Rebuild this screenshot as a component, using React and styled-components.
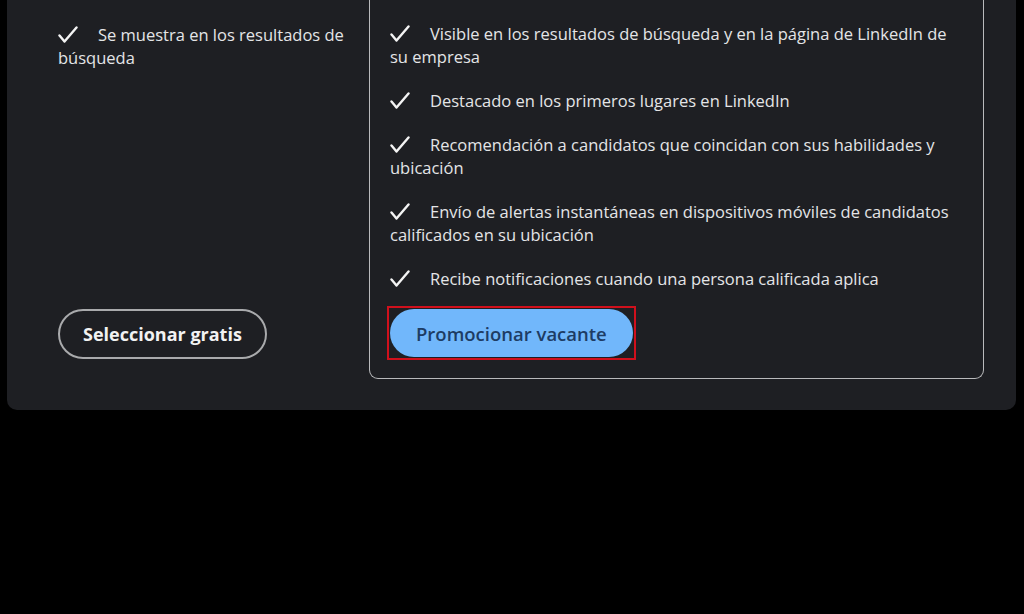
import React from "react";
import styled, { createGlobalStyle } from "styled-components";

const freeFeatures = ["Se muestra en los resultados de búsqueda"];

const promotedFeatures = [
  "Visible en los resultados de búsqueda y en la página de LinkedIn de su empresa",
  "Destacado en los primeros lugares en LinkedIn",
  "Recomendación a candidatos que coincidan con sus habilidades y ubicación",
  "Envío de alertas instantáneas en dispositivos móviles de candidatos calificados en su ubicación",
  "Recibe notificaciones cuando una persona calificada aplica",
];

const Check = () => (
  <CheckIcon viewBox="0 0 20 17" aria-hidden="true">
    <path d="M1.5 9.5 L6.5 15.5 L18.5 1.5" />
  </CheckIcon>
);

const FeatureList = ({ items }) => (
  <List>
    {items.map((text) => (
      <Item key={text}>
        <Check />
        {text}
      </Item>
    ))}
  </List>
);

const App = () => {
  return (
    <>
      <GlobalStyle />
      <Page>
        <Panel>
          <Column>
            <FeatureList items={freeFeatures} />
            <OutlineButton>Seleccionar gratis</OutlineButton>
          </Column>
          <Card>
            <FeatureList items={promotedFeatures} />
            {/* red highlight box drawn round the button */}
            <Highlight>
              <PrimaryButton>Promocionar vacante</PrimaryButton>
            </Highlight>
          </Card>
        </Panel>
      </Page>
    </>
  );
};

export default App;

const GlobalStyle = createGlobalStyle`
  html, body {
    margin: 0;
    background: #000;
  }
  body {
    font-family: "Open Sans", "Noto Sans", sans-serif;
    color: #e4e5e7;
  }
`;

const Page = styled.div`
  width: 1024px;
  height: 614px;
  overflow: hidden;
  background: #000;
  padding: 0 8px 0 7px;
  box-sizing: border-box;
`;

const Panel = styled.section`
  display: grid;
  grid-template-columns: 311px 1fr;
  background: #1e1f23;
  border-radius: 0 0 10px 10px;
  padding: 0 32px 31px 51px;
`;

const Column = styled.div`
  display: flex;
  flex-direction: column;
  justify-content: space-between;
  align-items: flex-start;
  padding: 23px 20px 20px 0;
`;

const Card = styled.div`
  display: flex;
  flex-direction: column;
  align-items: flex-start;
  gap: 16px;
  border: 1px solid #b9babc;
  border-top: none;
  border-radius: 0 0 9px 9px;
  padding: 22px 24px 18px 20px;
`;

const List = styled.ul`
  list-style: none;
  margin: 0;
  padding: 0;
  display: flex;
  flex-direction: column;
  gap: 21px;
`;

const Item = styled.li`
  font-size: 16.5px;
  line-height: 23px;
  color: #e4e5e7;
`;

const CheckIcon = styled.svg`
  width: 20px;
  height: 17px;
  margin-right: 20px;
  vertical-align: -2px;
  fill: none;
  stroke: #f4f4f4;
  stroke-width: 2.4;
  stroke-linecap: round;
  stroke-linejoin: round;
`;

const OutlineButton = styled.button`
  height: 50px;
  padding: 0 23px;
  border: 2px solid #a9aaac;
  border-radius: 25px;
  background: transparent;
  color: #f2f2f2;
  font-family: "Open Sans", "Noto Sans", sans-serif;
  font-size: 18px;
  font-weight: 700;
  cursor: pointer;
`;

const Highlight = styled.div`
  display: flex;
  margin-left: -3px;
  padding: 1px;
  border: 2px solid #d0101c;
`;

const PrimaryButton = styled.button`
  height: 48px;
  padding: 0 26px;
  border: none;
  border-radius: 24px;
  background: #71b7fb;
  color: #1d3c64;
  font-family: "Open Sans", "Noto Sans", sans-serif;
  font-size: 18.5px;
  font-weight: 600;
  cursor: pointer;
`;
